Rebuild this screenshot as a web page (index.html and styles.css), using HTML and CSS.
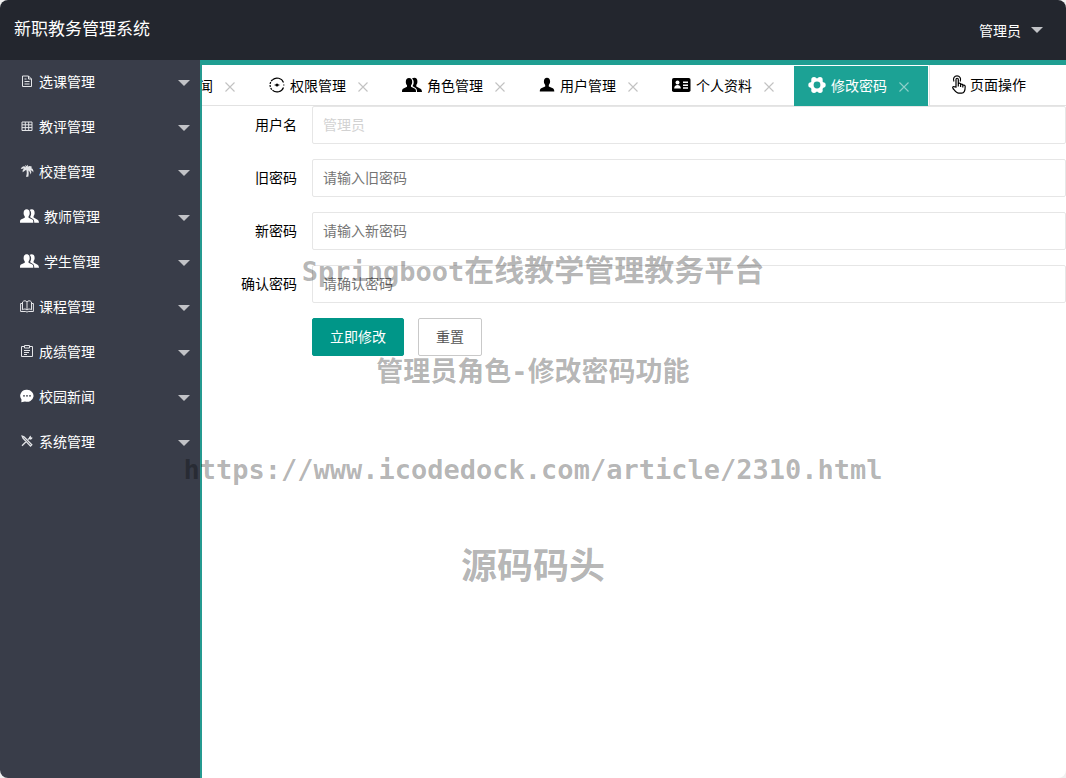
FILE: index.html
```html
<!DOCTYPE html>
<html lang="zh-CN">
<head>
<meta charset="utf-8">
<title>新职教务管理系统</title>
<link rel="stylesheet" href="styles.css">
</head>
<body>
<svg class="sprite" aria-hidden="true">
  <symbol id="i-users" viewBox="0 0 20 16"><path d="M7 1c2 0 3.300 1.500 3.200 4 0 1.600-.6 2.500-1.200 3.200v1.600l4 2c.8.500 1 1.500 1 3.200H0c0-1.700.2-2.700 1-3.200l4-2V8.200C4.400 7.500 3.800 6.600 3.800 5 3.700 2.500 5 1 7 1z"/><path d="M10 1.600C10.700 1 11.500.8 12.400.8c2 0 3.100 1.600 3 4 0 1.500-.5 2.500-1.100 3.200v1.600l3.700 2c1.400.7 1.900 1.700 2 3.400h-5c0-1.900-.3-3.200-1.400-3.900L10.700 9.300V8.700c.6-.8 1-2 1-3.700 0-1.400-.7-2.700-1.700-3.400z"/></symbol>
  <symbol id="i-close" viewBox="0 0 10 10"><path d="M.5.5l9 9M9.500.5l-9 9" fill="none" stroke="currentColor" stroke-width="1.100"/></symbol>
</svg>
<div class="app">
  <header class="header">
    <h1 class="title">新职教务管理系统</h1>
    <button class="account" type="button">管理员<span class="caret"></span></button>
  </header>
  <div class="body">
    <nav class="side">
      <a class="item" href="#"><svg class="ico" viewBox="0 0 14 14"><path d="M2.500 2h6l3 3v7.500h-9zM8.500 2v3h3M4.500 5h2M4.500 7.500h5M4.500 10h5" fill="none" stroke="currentColor"/></svg>选课管理<span class="caret"></span></a>
      <a class="item" href="#"><svg class="ico" viewBox="0 0 14 14"><path d="M2 3h10v8.500H2zM2 5.800h10M2 8.600h10M5.300 3v8.500M8.700 3v8.500" fill="none" stroke="currentColor"/></svg>教评管理<span class="caret"></span></a>
      <a class="item" href="#"><svg class="ico" viewBox="0 0 14 14"><path d="M6 3.500C4.500 1.500 2 2 .8 5l3.400-.4C3 5.500 2.300 6.500 2.700 8.300L6.200 5.800c.8 2 .8 4.500-.3 7h2.400c.6-2.500.5-4.500 0-6.200 1.200.7 2 1.900 2.200 3.900 1.200-1.600 1-3-.1-4.400 1.300.4 2.200 1.200 2.900 2.500.5-2.400-.6-3.900-2.300-4.500l1.200-1C10.500 1.700 9 1.700 7.800 2.700L8 .8 6.500 2 5 .8z" fill="currentColor"/></svg>校建管理<span class="caret"></span></a>
      <a class="item" href="#"><svg class="ico ico-wide"><use href="#i-users"/></svg>教师管理<span class="caret"></span></a>
      <a class="item" href="#"><svg class="ico ico-wide"><use href="#i-users"/></svg>学生管理<span class="caret"></span></a>
      <a class="item" href="#"><svg class="ico" viewBox="0 0 14 14"><path d="M7 3v8C6 9.700 4 9.700 2.500 10.800V3C4 1.200 6 1.500 7 3c1-1.500 3-1.800 4.500 0v7.800C10 9.700 8 9.700 7 11M2.500 4.500H.6v8h5.200l1.200.6 1.200-.6h5.200v-8h-1.900" fill="none" stroke="currentColor"/></svg>课程管理<span class="caret"></span></a>
      <a class="item" href="#"><svg class="ico" viewBox="0 0 14 14"><path d="M4.500 2.500h-3v10h11v-10h-3M4.500 1.500h5v2.500h-5zM4 6.500h6M4 8.500h5M4 10.500h3" fill="none" stroke="currentColor"/></svg>成绩管理<span class="caret"></span></a>
      <a class="item" href="#"><svg class="ico bright" viewBox="0 0 14 14"><path d="M7 .8a6.500 6 0 1 1-2 11.700L1.300 13.300l.2-2.900A6.300 6 0 0 1 7 .8z" fill="currentColor"/><g fill="#393d49"><circle cx="4" cy="6.800" r=".9"/><circle cx="7" cy="6.800" r=".9"/><circle cx="10" cy="6.800" r=".9"/></g></svg>校园新闻<span class="caret"></span></a>
      <a class="item" href="#"><svg class="ico" viewBox="0 0 14 14"><path d="M2.200 2.200l1.800.6 7.800 8-1.300 1.300L3 4.200zM2 11.800l4-4M8 5.500l1-1" fill="none" stroke="currentColor" stroke-width="1.300"/><path d="M9 5V3l2-1.500-.2 1.700L12.500 3.500 12 5l-1.700.8z" fill="currentColor"/></svg>系统管理<span class="caret"></span></a>
    </nav>
    <main class="main">
      <div class="tabbar">
        <div class="tabs">
          <div class="tab"><a href="#">校园新闻</a><button class="close" type="button" aria-label="关闭"><svg><use href="#i-close"/></svg></button></div>
          <div class="tab"><svg class="t16" viewBox="0 0 16 16"><path d="M3.500 2.700A7 7 0 0 1 14.500 5.500M14.500 10.500A7 7 0 0 1 3.500 13.300" fill="none" stroke="currentColor" stroke-width="1.200"/><path d="M3.500 2.700A7 7 0 0 0 3.500 13.300" fill="none" stroke="currentColor" stroke-width="1.200" stroke-dasharray="2 1"/><circle cx="8" cy="8" r="1.500"/><path d="M5.500 8h5M14 8h1.500" stroke="currentColor" stroke-width=".8"/></svg><a href="#">权限管理</a><button class="close" type="button" aria-label="关闭"><svg><use href="#i-close"/></svg></button></div>
          <div class="tab"><svg class="t20"><use href="#i-users"/></svg><a href="#">角色管理</a><button class="close" type="button" aria-label="关闭"><svg><use href="#i-close"/></svg></button></div>
          <div class="tab"><svg class="t16" viewBox="0 0 16 16"><path d="M8 .8c2 0 3.100 1.400 3.100 3.700 0 1.700-.7 2.700-1.300 3.400v1.600l4 1.700c1 .5 1.400 1.500 1.500 3.300H.8c0-1.800.4-2.800 1.400-3.300l4-1.700V7.900C5.600 7.200 4.900 6.200 4.900 4.500c0-2.300 1.100-3.700 3.100-3.700z"/></svg><a href="#">用户管理</a><button class="close" type="button" aria-label="关闭"><svg><use href="#i-close"/></svg></button></div>
          <div class="tab"><svg class="t19" viewBox="0 0 19 16"><rect x="0" y="1" width="18.500" height="14" rx="1.800"/><g fill="#fff"><circle cx="5.500" cy="5.500" r="2"/><path d="M2.200 11.500c0-2.300 1.200-3.500 3.300-3.500s3.300 1.200 3.300 3.500z"/><path d="M11 4.500h5V6h-5zM11 7.500h5V9h-5zM11 10.300h5v1.400h-5z"/></g></svg><a href="#">个人资料</a><button class="close" type="button" aria-label="关闭"><svg><use href="#i-close"/></svg></button></div>
          <div class="tab active"><svg class="t18" viewBox="0 0 18 18"><circle cx="9" cy="9" r="6.800"/><circle cx="15" cy="9" r="2.700"/><circle cx="3" cy="9" r="2.700"/><circle cx="12" cy="3.800" r="2.700"/><circle cx="6" cy="3.800" r="2.700"/><circle cx="12" cy="14.200" r="2.700"/><circle cx="6" cy="14.200" r="2.700"/><circle cx="9" cy="9" r="3.400" fill="#1ca295"/></svg><a href="#">修改密码</a><button class="close" type="button" aria-label="关闭"><svg><use href="#i-close"/></svg></button></div>
        </div>
        <button class="ops" type="button"><svg class="hand" viewBox="0 0 16 19"><path d="M5 12V4.500c0-1.700 2.300-1.700 2.300 0V9c0-1.300 2.200-1.300 2.300 0v.8c.2-1.100 2.200-1 2.200.3v.6c.3-1 2.400-.8 2.400.8 0 3 0 6.500-3.500 6.700H7.600c-2 0-3-1.600-5.600-4.700-1-1.400.6-2.500 1.700-1.600zM7.300 9v2.500M9.600 9.800V12M11.800 10.500V12.500M2.900 6.500C1.500 3.500 3.500.8 6 .8s4.600 2.700 3.200 5.700" fill="none" stroke="currentColor" stroke-width="1.200"/></svg>页面操作</button>
      </div>
      <form class="form">
        <div class="row"><label for="user">用户名</label><input id="user" type="text" value="管理员" disabled></div>
        <div class="row"><label for="old">旧密码</label><input id="old" type="password" placeholder="请输入旧密码"></div>
        <div class="row"><label for="new">新密码</label><input id="new" type="password" placeholder="请输入新密码"></div>
        <div class="row"><label for="again">确认密码</label><input id="again" type="password" placeholder="请确认密码"></div>
        <div class="actions"><button class="btn primary" type="button">立即修改</button><button class="btn" type="reset">重置</button></div>
      </form>
    </main>
  </div>
  <div class="marks">
    <p><span class="latin">Springboot</span><span class="large">在线教学管理教务平台</span></p>
    <p class="role">管理员角色<span class="latin">-</span>修改密码功能</p>
    <p class="latin link">https://www.icodedock.com/article/2310.html</p>
    <p class="brand">源码码头</p>
  </div>
</div>
</body>
</html>
```
FILE: styles.css
```css
* { box-sizing: border-box; }

body {
  margin: 0;
  background: #f0f0f0;
  color: #000;
  font: 14px/24px "Noto Sans CJK SC", sans-serif;
}

button, input { font: inherit; color: inherit; }
button { border: 0; background: none; padding: 0; cursor: pointer; }
a { color: inherit; text-decoration: none; }
svg { fill: currentColor; flex: none; }
.sprite { position: absolute; width: 0; height: 0; }

.app {
  position: relative;
  display: flex;
  flex-direction: column;
  min-height: 100vh;
  border-radius: 8px;
  overflow: hidden;
  background: #fff;
}

.header {
  display: flex;
  align-items: center;
  justify-content: space-between;
  height: 60px;
  padding: 0 23px 4px 14px;
  background: #23262e;
  color: #fff;
}
.title { margin: 0; font-size: 17px; font-weight: 400; }
.account { display: flex; align-items: center; gap: 10px; padding-top: 4px; }
.caret {
  border: 6px solid transparent;
  border-top-color: #c2c3c7;
  border-bottom-width: 0;
}

.body { display: flex; flex: 1; }
.side { width: 200px; flex: none; background: #393d49; color: #fff; }
.item {
  display: flex;
  align-items: center;
  gap: 5px;
  height: 45px;
  padding: 0 10px 3px 20px;
}
.item .caret { margin: 3px 0 0 auto; }
.ico { width: 14px; height: 14px; color: #e4e5e8; }
.ico-wide { width: 19px; height: 16px; }
.ico-wide, .bright { color: #fff; }

.main {
  flex: 1;
  min-width: 0;
  border-top: 5px solid #1f9e92;
  border-left: 2px solid #259a90;
}
.tabbar {
  display: flex;
  height: 41px;
  border-bottom: 1px solid #e2e2e2;
}
.tabs {
  display: flex;
  flex: 1;
  justify-content: flex-end;
  gap: 1px;
  min-width: 0;
  margin-bottom: -1px;
  padding-top: 1px;
  overflow: hidden;
}
.tab {
  display: flex;
  flex: none;
  align-items: center;
  gap: 5px;
  padding: 0 19px 2px 14px;
}
.tab.active { background: #1ca295; color: #fff; }
.t16 { width: 16px; height: 16px; }
.t18 { width: 18px; height: 18px; }
.t19 { width: 19px; height: 16px; }
.t20 { width: 20px; height: 16px; }
.close { display: flex; margin-left: 7px; padding-top: 3px; color: #c2c2c2; }
.close svg { width: 10px; height: 10px; }
.active .close { color: #8fd0ca; }
.ops {
  display: flex;
  align-items: center;
  gap: 3px;
  margin-left: 1px;
  padding: 0 40px 2px 21px;
  border-left: 1px solid #e2e2e2;
}
.hand { width: 16px; height: 19px; }

.row { display: flex; margin-bottom: 15px; }
.row label { width: 110px; padding: 6px 15px 8px 0; text-align: right; }
.row input {
  flex: 1;
  min-width: 0;
  height: 38px;
  padding: 0 10px 2px;
  border: 1px solid #e6e6e6;
  border-radius: 2px;
  background: #fff;
}
.row input:disabled { color: #d2d2d2; }
.row input::placeholder { color: #757575; opacity: 1; }
.actions { display: flex; gap: 14px; padding-left: 110px; }
.btn {
  height: 38px;
  padding: 0 17px 2px;
  border: 1px solid #c9c9c9;
  border-radius: 2px;
  color: #555;
}
.primary { border-color: #009688; background: #009688; color: #fff; }

/* Translucent captions laid over the whole window */
.marks {
  position: absolute;
  inset: 0;
  padding-top: 218px;
  text-align: center;
  white-space: nowrap;
  font-size: 27px;
  font-weight: 700;
  line-height: 100px;
  color: rgba(0, 0, 0, 0.3);
  pointer-events: none;
}
.marks p { margin: 0; height: 100px; }
.marks .latin { font-family: "DejaVu Sans Mono", monospace; }
.marks .large { font-size: 30px; }
.marks .role, .marks .link { line-height: 104px; }
.marks .brand { height: 90px; font-size: 36px; line-height: 90px; }
```
